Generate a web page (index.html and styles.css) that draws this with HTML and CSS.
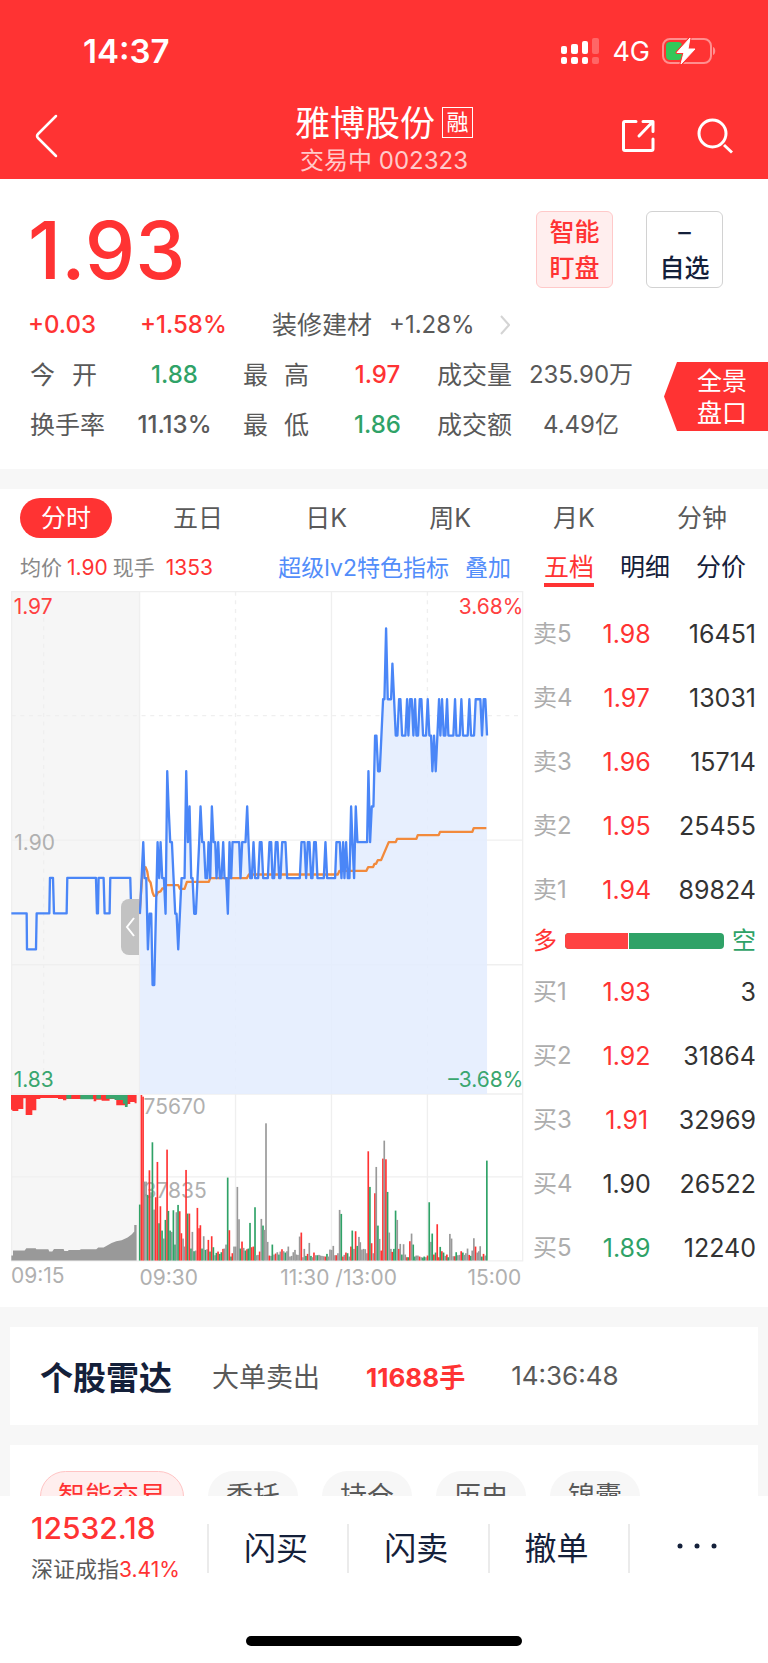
FILE: index.html
```html
<!DOCTYPE html>
<html lang="zh-CN">
<head>
<meta charset="utf-8">
<meta name="viewport" content="width=device-width, initial-scale=1">
<title>雅博股份 002323</title>
<link rel="stylesheet" href="styles.css">
</head>
<body>
<div class="app">
  <header class="header">
    <div class="status">
      <time class="status-time">14:37</time>
      <div class="status-icons">
        <svg class="signal" viewBox="0 0 39 28" width="39" height="28" fill="#fff" aria-hidden="true">
          <rect x="0" y="9" width="6" height="8" rx="2"/><rect x="0" y="20" width="6" height="7" rx="2"/>
          <rect x="10" y="7" width="7" height="10" rx="2"/><rect x="10" y="20" width="7" height="7" rx="2"/>
          <rect x="21" y="4" width="6" height="13" rx="2"/><rect x="21" y="20" width="6" height="7" rx="2"/>
          <g opacity=".25"><rect x="31" y="1" width="7" height="16" rx="2"/><rect x="31" y="20" width="7" height="7" rx="2"/></g>
        </svg>
        <span class="network">4G</span>
        <svg class="battery" viewBox="0 0 54 28" width="54" height="28" aria-hidden="true">
          <rect x="1" y="2" width="48" height="24" rx="7" fill="none" stroke="#fff" stroke-opacity=".45" stroke-width="2"/>
          <path d="M51 10c3 1 3 7 0 8z" fill="#fff" fill-opacity=".45"/>
          <rect x="4" y="5" width="16" height="18" rx="4" fill="#34c759"/>
          <path d="M28 1 15 15.500h7L19 27l14-15h-7z" fill="#fff" stroke="#ff3333" stroke-width="3" stroke-linejoin="round"/>
          <path d="M28 1 15 15.500h7L19 27l14-15h-7z" fill="#fff" stroke="#fff" stroke-linejoin="round"/>
        </svg>
      </div>
    </div>
    <div class="navbar">
      <button class="icon-btn back" type="button" aria-label="返回">
        <svg viewBox="0 0 24 44" width="24" height="44" fill="none" stroke="#fff" stroke-width="2.500" stroke-linecap="round" stroke-linejoin="round"><path d="M21 2 3 20q-2 2 0 4l18 18"/></svg>
      </button>
      <div class="title-block">
        <h1 class="title">雅博股份<span class="badge">融</span></h1>
        <p class="subtitle">交易中 002323</p>
      </div>
      <div class="nav-actions">
        <button class="icon-btn" type="button" aria-label="分享">
          <svg viewBox="0 0 34 34" width="34" height="34" fill="none" stroke="#fff" stroke-width="3" stroke-linecap="round" stroke-linejoin="round"><path d="M15 2.500H4Q2.500 2.500 2.500 4v26q0 1.500 1.500 1.500h26.500q1.500 0 1.500-1.500V20M22 2.500h10v10M31 3.500 18 17"/></svg>
        </button>
        <button class="icon-btn" type="button" aria-label="搜索">
          <svg viewBox="0 0 36 36" width="36" height="36" fill="none" stroke="#fff" stroke-width="3"><circle cx="15.500" cy="15.500" r="13.500"/><path d="m27 27 8 7.500"/></svg>
        </button>
      </div>
    </div>
  </header>

  <main class="content">
    <section class="quote">
      <div class="quote-top">
        <strong class="price">1.93</strong>
        <button class="box-btn box-btn-red" type="button">智能<br>盯盘</button>
        <button class="box-btn" type="button">–<br>自选</button>
      </div>
      <div class="change-row">
        <span class="change up">+0.03</span>
        <span class="percent up">+1.58%</span>
        <a class="industry" href="#industry">装修建材 <span>+1.28%</span>
          <svg viewBox="0 0 10 20" width="10" height="20" fill="none" stroke="#d4d4d4" stroke-width="2"><path d="m1 1 8 9-8 9"/></svg>
        </a>
      </div>
      <div class="stats-row">
        <dl class="stats">
          <dt class="spread"><span>今</span><span>开</span></dt><dd class="down">1.88</dd>
          <dt class="spread"><span>最</span><span>高</span></dt><dd class="up">1.97</dd>
          <dt>成交量</dt><dd class="plain">235.90万</dd>
          <dt>换手率</dt><dd>11.13%</dd>
          <dt class="spread"><span>最</span><span>低</span></dt><dd class="down">1.86</dd>
          <dt>成交额</dt><dd class="plain">4.49亿</dd>
        </dl>
        <button class="flag" type="button">全景<br>盘口</button>
      </div>
    </section>

    <section class="market">
      <nav class="periods">
        <button class="period active" type="button">分时</button>
        <button class="period" type="button">五日</button>
        <button class="period" type="button">日K</button>
        <button class="period" type="button">周K</button>
        <button class="period" type="button">月K</button>
        <button class="period" type="button">分钟</button>
      </nav>
      <div class="market-grid">
        <div class="chart-col">
          <div class="chart-info">
            <span class="readout">均价<b>1.90</b>现手<b class="lots">1353</b></span>
            <span class="chart-links"><a href="#lv2">超级lv2特色指标</a><a href="#overlay">叠加</a></span>
          </div>
          <div class="chart-wrap">
            <svg class="chart" id="chart" viewBox="34 0 1540 2106" role="img" aria-label="分时走势">
              <rect x="35" y="4" width="385" height="2010" fill="#f6f6f6"/>
              <g class="grid-lines">
                <path d="M36 5H1570V2014H36ZM36 751H1570M36 1125H1570M36 1513H1570M36 1762H1570M420 5V2014M996 5V2014M708 1513V2014M1284 1513V2014"/>
                <path stroke-dasharray="12 14" d="M36 377H1570M132 5V1513M708 5V1513M1284 5V1513"/>
              </g>
              <path class="area" id="area"/>
              <g class="labels">
                <text x="432" y="1572">75670</text>
                <text x="432" y="1826">37835</text>
                <text x="44" y="782">1.90</text>
              </g>
              <path fill="#ff3333" d="M34 1516H411V1541H405V1537H392V1543H384V1547H350V1528H330V1533H306V1530H290V1535H282V1528H200V1532H190V1528H175V1525H122V1528H110V1562H98V1576H78V1526H71V1558H56V1564H38V1560H34Z"/>
              <path fill="#3aa66f" d="M200 1516H215V1527H200ZM242 1516H280V1529H242ZM290 1516H304V1527H290ZM319 1516H384V1552H376V1542H370V1531H345V1527H319Z"/>
              <path fill="#999" d="M35 2013V1998H40V1983H75L80 1976H108L110 1979H146L149 1986H158L163 1978H192L194 1984H206V1981H240L244 1979H290L296 1974H312L336 1960L350 1955L366 1952L384 1944L396 1935L404 1926V1906H411V2013Z"/>
              <g id="bars"></g>
              <path class="line average" d="M420 973 427 870 430 845 438 832 443 845 447 870 453 878 459 908 463 918H470L475 908 483 905 488 896H496L500 886H536L541 897H555L562 876H628L632 865H742L748 854H1015L1020 843H1101L1106 832H1121L1125 822H1130L1135 811H1145L1168 757H1189L1193 747H1251L1255 736H1318L1322 726H1419L1423 715H1461"/>
              <path class="line" d="M35 971H81L82 1079H109L111 971H149L151 864H160L163 971H201L203 864H289L292 971H295L297 864H312L315 971H330L332 864H392L395 971H400"/>
              <path class="line" id="price-line"/>
              <g class="labels">
                <text class="label-up" x="42" y="71">1.97</text>
                <text class="label-up" x="1572" y="71" text-anchor="end">3.68%</text>
                <text class="label-down" x="42" y="1492">1.83</text>
                <text class="label-down" x="1572" y="1492" text-anchor="end">–3.68%</text>
                <text x="34" y="2080">09:15</text>
                <text x="420" y="2085">09:30</text>
                <text x="842" y="2085">11:30 /13:00</text>
                <text x="1566" y="2085" text-anchor="end">15:00</text>
              </g>
            </svg>
            <button class="handle" type="button" aria-label="收起集合竞价">
              <svg viewBox="0 0 10 20" width="10" height="20" fill="none" stroke="#fff" stroke-width="2"><path d="M9 1 2 10l7 9"/></svg>
            </button>
          </div>
        </div>
        <div class="book-col">
          <div class="book-tabs">
            <button class="book-tab active" type="button">五档</button>
            <button class="book-tab" type="button">明细</button>
            <button class="book-tab" type="button">分价</button>
          </div>
          <table class="book">
            <tr><th scope="row">卖5</th><td class="up">1.98</td><td>16451</td></tr>
            <tr><th scope="row">卖4</th><td class="up">1.97</td><td>13031</td></tr>
            <tr><th scope="row">卖3</th><td class="up">1.96</td><td>15714</td></tr>
            <tr><th scope="row">卖2</th><td class="up">1.95</td><td>25455</td></tr>
            <tr><th scope="row">卖1</th><td class="up">1.94</td><td>89824</td></tr>
          </table>
          <div class="ratio"><span class="up">多</span><span class="ratio-bar"><i></i></span><span class="down">空</span></div>
          <table class="book">
            <tr><th scope="row">买1</th><td class="up">1.93</td><td>3</td></tr>
            <tr><th scope="row">买2</th><td class="up">1.92</td><td>31864</td></tr>
            <tr><th scope="row">买3</th><td class="up">1.91</td><td>32969</td></tr>
            <tr><th scope="row">买4</th><td>1.90</td><td>26522</td></tr>
            <tr><th scope="row">买5</th><td class="down">1.89</td><td>12240</td></tr>
          </table>
        </div>
      </div>
    </section>

    <section class="card radar">
      <h2>个股雷达</h2>
      <span>大单卖出</span>
      <strong>11688手</strong>
      <time>14:36:48</time>
    </section>

    <section class="card trade">
      <button class="pill active" type="button">智能交易</button>
      <button class="pill" type="button">委托</button>
      <button class="pill" type="button">持仓</button>
      <button class="pill" type="button">历史</button>
      <button class="pill" type="button">锦囊</button>
    </section>
  </main>

  <footer class="footer">
    <div class="actions">
      <a class="index" href="#index">
        <strong>12532.18</strong>
        <span>深证成指<em>3.41%</em></span>
      </a>
      <button class="action" type="button">闪买</button>
      <button class="action" type="button">闪卖</button>
      <button class="action" type="button">撤单</button>
      <button class="action" type="button" aria-label="更多">
        <svg viewBox="0 0 40 6" width="40" height="6" fill="#14203a"><circle cx="3" cy="3" r="2.500"/><circle cx="20" cy="3" r="2.500"/><circle cx="37" cy="3" r="2.500"/></svg>
      </button>
    </div>
    <div class="home-bar"></div>
  </footer>
</div>
<script src="chart.js"></script>
</body>
</html>
```

FILE: styles.css
```css
:root {
  --red: #ff3333;
  --green: #2fa267;
  --ink: #14203a;
  --text: #595959;
  --muted: #adadad;
  --band: #f7f7f7;
  --blue: #4a86f7;
}

* { box-sizing: border-box; }

body {
  margin: 0;
  background: var(--band);
  color: var(--text);
  font-family: Inter, "Noto Sans CJK SC", sans-serif;
  font-size: 25px;
}

h1, h2, p, dl, dd { margin: 0; font-weight: 400; }

button {
  margin: 0;
  padding: 0;
  border: 0;
  background: none;
  color: inherit;
  font: inherit;
}

a { color: inherit; text-decoration: none; }

svg { display: block; }

.up { color: var(--red); }
.down { color: var(--green); }

.app {
  display: flex;
  flex-direction: column;
  height: 100vh;
}

.header {
  flex: none;
  background: var(--red);
  color: #fff;
}

.status {
  display: flex;
  align-items: center;
  justify-content: space-between;
  height: 102px;
  padding: 0 52px 0 83px;
}

.status-time {
  font-size: 33px;
  font-weight: 600;
}

.status-icons {
  display: flex;
  align-items: center;
  gap: 12px;
}

.network { font-size: 27px; }

.navbar {
  display: grid;
  grid-template-columns: 1fr auto 1fr;
  align-items: center;
  height: 77px;
  padding: 0 35px;
}

.icon-btn { padding-bottom: 9px; }

.back { justify-self: start; }

.title-block { text-align: center; }

.title {
  display: flex;
  align-items: center;
  justify-content: center;
  gap: 7px;
  font-size: 35px;
  line-height: 40px;
}

.badge {
  width: 31px;
  height: 31px;
  border: 1px solid #fff;
  font-size: 22px;
  line-height: 28px;
}

.subtitle {
  color: #ffcaca;
  font-size: 24px;
  line-height: 36px;
}

.nav-actions {
  display: flex;
  align-items: center;
  justify-content: flex-end;
  gap: 42px;
}

.content {
  flex: 1;
  min-height: 0;
  overflow: hidden;
}

.quote {
  padding: 32px 0 19px 28px;
  background: #fff;
}

.quote-top {
  display: flex;
  gap: 33px;
  height: 77px;
  margin: 0 45px 12px 0;
}

.price {
  margin-right: auto;
  color: var(--red);
  font-size: 80px;
  font-weight: 500;
  line-height: 78px;
}

.box-btn {
  width: 77px;
  border: 1px solid #d2d2d2;
  border-radius: 6px;
  color: var(--ink);
  font-weight: 500;
  line-height: 36px;
}

.box-btn-red {
  border-color: #ffc9c9;
  background: #ffeeee;
  color: var(--red);
}

.change-row {
  display: flex;
  align-items: center;
  height: 50px;
  line-height: 50px;
}

.change,
.percent {
  font-size: 24px;
  font-weight: 500;
}

.change { width: 112px; }
.percent { width: 132px; }

.industry {
  display: flex;
  align-items: center;
  gap: 17px;
}

.industry span { font-size: 24px; }

.industry svg { margin-left: 8px; }

.stats-row {
  display: flex;
  align-items: flex-start;
  justify-content: space-between;
}

.stats {
  display: grid;
  grid-template-columns: 76px 93px 75px 75px 75px 94px;
  grid-auto-rows: 50px;
  column-gap: 22px;
  padding-left: 2px;
  line-height: 50px;
  white-space: nowrap;
}

.spread {
  display: flex;
  justify-content: space-between;
  padding-right: 9px;
}

.stats dd {
  justify-self: center;
  font-size: 24px;
  font-weight: 500;
}

.stats .plain { font-weight: 400; }

.flag {
  width: 104px;
  height: 69px;
  margin-top: 12px;
  padding-left: 12px;
  background: var(--red);
  clip-path: polygon(13px 0, 100% 0, 100% 100%, 13px 100%, 0 50%);
  color: #fff;
  line-height: 32px;
}

.market {
  margin-top: 20px;
  padding: 9px 0 15px;
  background: #fff;
}

.periods {
  display: flex;
  justify-content: space-between;
  padding: 0 20px;
}

.period {
  height: 40px;
  padding: 0 21px;
  border-radius: 20px;
  line-height: 40px;
}

.period.active {
  background: var(--red);
  color: #fff;
}

.market-grid {
  display: grid;
  grid-template-columns: minmax(0, 513fr) minmax(0, 223fr);
  column-gap: 9px;
  padding: 0 12px 0 11px;
}

.chart-info {
  display: flex;
  align-items: center;
  justify-content: space-between;
  height: 52px;
  padding: 4px 13px 0 9px;
  color: #888;
  font-size: 21px;
}

.readout b {
  margin: 0 5px;
  color: var(--red);
  font-weight: 400;
}

.readout .lots { margin-left: 11px; }

.chart-links {
  display: flex;
  gap: 16px;
  color: #528dfa;
  font-size: 23px;
}

.chart-wrap { position: relative; }

.chart {
  width: 100%;
  height: auto;
}

.grid-lines {
  fill: none;
  stroke: #efefef;
  stroke-width: 4;
}

.line {
  fill: none;
  stroke: var(--blue);
  stroke-width: 7;
  stroke-linejoin: round;
}

.average { stroke: #f28a3c; }

.area {
  fill: #e4edfe;
  fill-opacity: .88;
}

.labels {
  fill: #b0b0b0;
  font-size: 63px;
}

.label-up { fill: #ff4040; }
.label-down { fill: #3aa66f; }

.handle {
  position: absolute;
  top: 44%;
  right: 75%;
  display: flex;
  align-items: center;
  justify-content: center;
  width: 18px;
  height: 56px;
  border-radius: 8px 0 0 8px;
  background: #c2c2c2;
}

.book-tabs {
  display: flex;
  gap: 26px;
  height: 53px;
  padding: 8px 0 0 11px;
  margin-bottom: 11px;
  color: var(--ink);
}

.book-tab {
  height: 41px;
  line-height: 43px;
}

.book-tab.active {
  border-bottom: 4px solid var(--red);
  color: var(--red);
}

.book {
  width: 100%;
  border-collapse: collapse;
  color: #333;
  font-size: 25px;
  line-height: 30px;
}

.book tr { height: 64px; }

.book th {
  width: 28%;
  padding: 0;
  color: var(--muted);
  font-size: 24px;
  font-weight: 400;
  text-align: left;
}

.book td {
  padding: 0;
  text-align: right;
}

.book td:nth-child(2) {
  width: 28%;
  text-align: center;
}

.ratio {
  display: flex;
  align-items: center;
  gap: 8px;
  height: 38px;
  font-size: 24px;
  line-height: 38px;
}

.ratio-bar {
  flex: 1;
  height: 16px;
  overflow: hidden;
  border-radius: 4px;
  background: var(--green);
}

.ratio-bar i {
  display: block;
  width: 40%;
  height: 100%;
  border-right: 1px solid #fff;
  background: #ff4242;
}

.card {
  display: flex;
  align-items: center;
  margin: 20px 10px 0;
  padding: 0 30px;
  background: #fff;
}

.radar {
  height: 98px;
  gap: 46px;
  font-size: 27px;
}

.radar h2 {
  margin-right: -6px;
  color: var(--ink);
  font-size: 33px;
  font-weight: 700;
}

.radar strong {
  color: var(--red);
  font-size: 26px;
}

.radar time { font-size: 26px; }

.trade {
  gap: 24px;
  padding-top: 26px;
}

.pill {
  height: 51px;
  padding: 0 18px;
  border-radius: 26px;
  background: var(--band);
  font-size: 27px;
  line-height: 51px;
}

.pill.active {
  padding: 0 17px;
  border: 1px solid #ffc4c4;
  background: #ffeeee;
  color: var(--red);
  line-height: 49px;
}

.footer {
  display: flex;
  flex: none;
  flex-direction: column;
  align-items: center;
  justify-content: space-between;
  height: 167px;
  padding-bottom: 17px;
  background: #fff;
}

.actions {
  display: grid;
  grid-template-columns: 207px repeat(4, 1fr);
  align-items: center;
  width: 100%;
  height: 105px;
}

.index {
  display: flex;
  flex-direction: column;
  padding-left: 31px;
  font-size: 22px;
  line-height: 41px;
}

.index strong {
  color: var(--red);
  font-size: 30px;
  font-weight: 500;
}

.index em {
  color: var(--red);
  font-size: 21px;
  font-style: normal;
}

.action {
  display: flex;
  align-items: center;
  justify-content: center;
  height: 49px;
  padding: 0 4px 6px 0;
  border-left: 2px solid #ebebeb;
  color: var(--ink);
  font-size: 32px;
}

.home-bar {
  width: 36%;
  height: 10px;
  border-radius: 5px;
  background: #000;
}
```

FILE: chart.js
```js
// One slot per trading minute, starting at 09:30.
const START_X = 421;
const STEP = 4.8;

// Price levels one cent apart, highest first; each run is level + minutes.
const LEVELS = { A: 115, B: 221, C: 328, D: 437, E: 544, F: 650, G: 757, H: 865, I: 972, J: 1079, K: 1186 };
const RUNS = 'I1 H1 G1 H2 J1 I2 K2 I1 G1 H1 G1 H2 I1 E1 F1 G2 H1 I2 J1 I1 H3 E1 G1 F1 H2 I2 H1 G1 F1 G2 H2 G1 H1 F1 G2 H1 G1 H2 G1 H2 I1 G1 H1 G5 H1 G3 F1 G1 H2 G1 H3 G2 H4 G2 H2 G2 H2 G3 H9 G3 H1 G2 H2 G2 H5 G1 H6 G3 H1 G1 H1 G1 H2 F1 G1 H1 F1 G7 E1 G1 F2 D2 E2 D1 C2 A1 C3 B1 C1 D2 C2 D3 C1 D1 C2 D1 C1 D2 C2 D3 C1 D2 E1 D1 E1 D1 C1 D1 C1 D2 C1 D4 C1 D3 C1 D4 C1 D3 C4 D1 C2 D1';

const prices = RUNS.split(' ').flatMap(run => Array(Number(run.slice(1))).fill(LEVELS[run[0]]));
const points = prices.map((y, i) => `${Math.round(START_X + i * STEP)} ${y}`);
const lastX = Math.round(START_X + (prices.length - 1) * STEP);

document.getElementById('price-line').setAttribute('d', 'M' + points.join('L'));
document.getElementById('area').setAttribute('d', `M${START_X} 1513L${points.join('L')}L${lastX} 1513Z`);

// Volume per minute: r = up, g = down, n = flat.
const VOLUME = 'g168 r497 r492 n237 n237 g197 r271 n205 g355 n153 r190 r296 g112 r163 g90 n66 g122 r333 g149 g90 n86 g151 g48 n145 g167 r148 r82 n66 n42 r272 g141 r141 g36 n86 g28 n30 r158 r97 r106 g36 n73 g32 n34 r62 g27 r73 g40 n16 g23 r27 g20 g25 r35 n36 n48 g249 r91 g12 r22 n42 n42 n221 n124 g36 r57 n38 g30 r34 g36 g113 r40 r42 g160 n16 n17 r27 n125 g105 n92 n412 n56 r15 n14 g48 n18 r21 n25 g18 n27 r34 n28 g24 n28 n42 n12 n14 n25 n32 n18 n17 n72 r84 n10 n35 g14 r20 n53 g14 n10 r24 n16 g16 n17 n15 n14 n13 r12 g20 n12 n33 n32 n44 n16 r16 n22 n152 g140 r12 n17 r24 g22 n12 r42 g90 n35 r88 g44 n71 n55 n33 n35 n34 n22 r328 g221 r52 n22 r202 n281 g105 n65 r30 r306 n360 r304 g206 n84 n35 r26 g35 g150 n122 r35 n50 g18 n49 n18 r10 g10 r58 n81 g48 g12 n15 n15 r12 n10 g9 g12 n10 r15 g175 n56 g81 r18 g24 r109 r10 g41 r28 g24 n14 r18 g10 n80 n66 n13 r13 g25 n16 n17 r28 g24 n17 n22 n36 r17 g14 n30 n67 r42 n24 n28 n43 g12 r20 n15 g300';
const COLORS = { r: '#ff3333', g: '#2fa267', n: '#999999' };
const BASELINE = 2013;

const bars = document.getElementById('bars');
VOLUME.split(' ').forEach((entry, i) => {
  const height = Number(entry.slice(1));
  const bar = document.createElementNS('http://www.w3.org/2000/svg', 'rect');
  bar.setAttribute('x', Math.round(START_X + i * STEP) - 3);
  bar.setAttribute('y', BASELINE - height);
  bar.setAttribute('width', 5);
  bar.setAttribute('height', height);
  bar.setAttribute('fill', COLORS[entry[0]]);
  bars.appendChild(bar);
});
```
